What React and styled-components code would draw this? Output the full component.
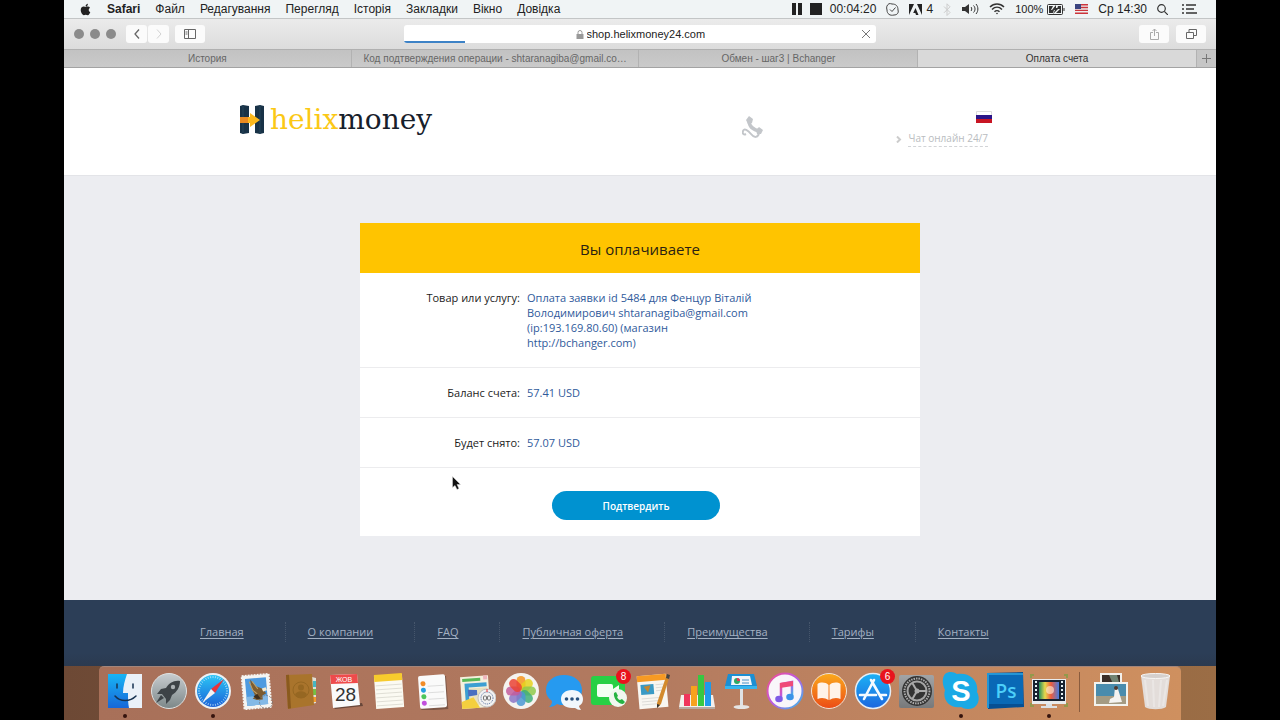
import React from "react";
import styled, { createGlobalStyle, css } from "styled-components";
import { FaApple } from "react-icons/fa";

const GlobalStyle = createGlobalStyle`
  *, *::before, *::after { box-sizing: border-box; }
  body { margin: 0; background: #000; }
  button, input { font: inherit; color: inherit; border: 0; margin: 0; padding: 0; background: none; }
  svg { display: block; flex: none; }
`;

const system = `"Liberation Sans", Arial, sans-serif`;
const site = `"Open Sans", "Noto Sans", sans-serif`;

const Desktop = styled.div`
  display: flex;
  flex-direction: column;
  min-height: 100vh;
  margin: 0 5%;
  font-family: ${system};
  background: linear-gradient(90deg, #6d4935, #80583d 40%, #9b6d45);
`;

/* ---------- menu bar ---------- */

const MenuBar = styled.nav`
  display: flex;
  justify-content: space-between;
  align-items: center;
  height: 18px;
  padding: 0 19px 0 15px;
  background: #f0f4f5;
  font-size: 12px;
  line-height: 18px;
  color: #222;
`;

const MenuGroup = styled.div`
  display: flex;
  align-items: center;
  gap: ${(p) => p.$gap}px;
  white-space: nowrap;
`;

const MenuItem = styled.button`
  font-weight: ${(p) => (p.$strong ? 700 : 400)};
`;

const MenuStatus = styled.span`
  display: flex;
  align-items: center;
  gap: ${(p) => p.$gap || 4}px;
  font-size: ${(p) => (p.$small ? 11 : 12)}px;
`;

/* ---------- browser chrome ---------- */

const Toolbar = styled.div`
  display: grid;
  grid-template-columns: 1fr minmax(0, 472px) 1fr;
  align-items: center;
  height: 31px;
  padding: 0 10px;
  background: linear-gradient(#ebebeb, #dcdcdc);
  border-top: 1px solid #c3c5c6;
`;

const ToolGroup = styled.div`
  display: flex;
  align-items: center;
  justify-content: ${(p) => (p.$end ? "flex-end" : "flex-start")};
  gap: ${(p) => p.$gap}px;
`;

const Lights = styled.div`
  display: flex;
  gap: 6px;
  margin-right: 4px;
`;

const Light = styled.button`
  width: 10px;
  height: 10px;
  border-radius: 50%;
  background: #8b8b8b;
`;

const NavPair = styled.div`
  display: flex;
  gap: 1px;
`;

const ToolButton = styled.button`
  display: flex;
  align-items: center;
  justify-content: center;
  width: ${(p) => (p.$wide ? 30 : 21)}px;
  height: 18px;
  border-radius: 3px;
  background: #fbfbfb;
  color: ${(p) => (p.$faint ? "#d2d2d2" : "#666")};
`;

const AddressBar = styled.div`
  position: relative;
  display: flex;
  align-items: center;
  justify-content: center;
  gap: 3px;
  height: 18px;
  border-radius: 3px;
  background: #fff;
  overflow: hidden;
`;

const AddressInput = styled.input`
  width: 118px;
  height: 18px;
  font-size: 11px;
  color: #222;
  outline: none;
`;

const LoadProgress = styled.span`
  position: absolute;
  left: 0;
  bottom: 0;
  width: 13%;
  height: 2px;
  background: #3d82c6;
`;

const StopButton = styled.button`
  position: absolute;
  right: 6px;
  top: 5px;
  color: #777;
`;

const TabStrip = styled.div`
  display: flex;
  height: 19px;
  border-top: 1px solid #b0b0b0;
  border-bottom: 1px solid #a3a3a3;
  background: #c6c6c6;
`;

const Tab = styled.button`
  flex: ${(p) => p.$grow} 1 0;
  min-width: 0;
  overflow: hidden;
  white-space: nowrap;
  text-overflow: ellipsis;
  font-size: 10px;
  line-height: 17px;
  color: ${(p) => (p.$active ? "#333" : "#666")};
  background: ${(p) => (p.$active ? "#d9d9d9" : "linear-gradient(#c2c2c2, #cacaca)")};
  border-right: 1px solid #b2b2b2;
`;

const NewTab = styled.button`
  display: flex;
  align-items: center;
  justify-content: center;
  width: 19px;
  color: #777;
`;

/* ---------- site ---------- */

const SiteHeader = styled.header`
  height: 108px;
  padding-top: 36px;
  background: #fff;
  border-bottom: 1px solid #e3e4e8;
  font-family: ${site};
`;

const HeaderInner = styled.div`
  display: flex;
  align-items: flex-start;
  width: 800px;
  max-width: 100%;
  margin: 0 auto;
  padding-right: 48px;
`;

const Logo = styled.a`
  display: flex;
  gap: 6px;
  flex: 11 1 0;
  font-family: "DejaVu Serif", serif;
  font-size: 28px;
  line-height: 32px;
  color: #17202b;
  text-decoration: none;
`;

const LogoAccent = styled.span`
  color: #fbc815;
`;

const PhoneLink = styled.a`
  padding-top: 12px;
`;

const HeaderSide = styled.div`
  display: flex;
  flex-direction: column;
  align-items: flex-end;
  flex: 5 1 0;
  gap: 8px;
  padding-top: 7px;
`;

const ChatLink = styled.a`
  display: flex;
  align-items: center;
  gap: 6px;
  margin-right: 4px;
  font-size: 10px;
  line-height: 15px;
  color: #b9bcc0;
  text-decoration: none;
`;

const ChatText = styled.span`
  border-bottom: 1px dashed #d2d4d7;
`;

const Main = styled.main`
  flex: 1 0 auto;
  padding: 47px 16px 64px;
  background: #ecedf1;
  font-family: ${site};
`;

const Card = styled.section`
  width: 560px;
  max-width: 100%;
  margin: 0 auto;
  padding-bottom: 16px;
  background: #fff;
`;

const CardTitle = styled.h1`
  margin: 0;
  padding: 14px 0 12px;
  font-size: 15px;
  line-height: 24px;
  font-weight: 400;
  text-align: center;
  color: #2a1f12;
  background: #ffc400;
`;

const Details = styled.dl`
  margin: 0;
`;

const DetailRow = styled.div`
  display: grid;
  grid-template-columns: 160px 240px;
  column-gap: 7px;
  padding: 17px 0;
  border-bottom: 1px solid #ececee;
  font-size: 11px;
  line-height: 15px;
`;

const DetailLabel = styled.dt`
  text-align: right;
  color: #1c1c1c;
`;

const DetailValue = styled.dd`
  margin: 0;
  color: #2f5a9b;
`;

const ConfirmButton = styled.button`
  display: block;
  width: 168px;
  height: 29px;
  margin: 23px 0 0 192px;
  border-radius: 15px;
  background: #0092d0;
  color: #fff;
  font-size: 10px;
  font-weight: 600;
`;

const SiteFooter = styled.footer`
  padding: 22px 0 24px;
  background: linear-gradient(#2c3e57 80%, #2b3a50);
  font-family: ${site};
`;

const FooterNav = styled.nav`
  display: flex;
  width: 880px;
  max-width: 100%;
  margin: 0 auto;
  font-size: 11px;
  line-height: 20px;
`;

const FooterCell = styled.div`
  padding: 0 41px 0 22px;
  border-right: 1px dotted #46566c;
  &:first-child { padding-left: 0; }
  &:last-child { border: 0; }
`;

const FooterLink = styled.a`
  color: #a3b0c2;
  text-underline-offset: 2px;
`;

const Cursor = styled.svg`
  position: absolute;
  left: 92px;
  top: 8px;
`;

const ActionArea = styled.div`
  position: relative;
  display: flow-root;
`;

/* ---------- dock ---------- */

const Dock = styled.nav`
  display: flex;
  justify-content: center;
  align-self: center;
  width: 94%;
  height: 54px;
  padding-top: 5px;
  border-radius: 5px 5px 0 0;
  border-top: 1px solid #a3857a;
  background: linear-gradient(90deg, #a87059, #b27a60 50%, #cf905f);
`;

const DockItem = styled.button`
  position: relative;
  display: flex;
  justify-content: center;
  flex: 0 1 44px;
  height: 47px;
  ${(p) =>
    p.$running &&
    css`
      &::after {
        content: "";
        position: absolute;
        left: 50%;
        bottom: 1px;
        width: 4px;
        height: 4px;
        margin-left: -2px;
        border-radius: 50%;
        background: #35130d;
      }
    `}
`;

const DockDivider = styled.span`
  width: 1px;
  height: 40px;
  margin: 0 9px 0 8px;
  background: #8a5c3e;
`;

const Badge = styled.span`
  position: absolute;
  right: 0;
  top: -3px;
  width: 15px;
  height: 15px;
  border-radius: 50%;
  background: #e8131d;
  color: #fff;
  font-family: ${system};
  font-size: 10px;
  line-height: 15px;
  text-align: center;
`;

const Art = ({ children }) => (
  <svg width="38" height="38" viewBox="0 0 38 38" aria-hidden="true">{children}</svg>
);

const petals = ["#f7941d", "#e6d21e", "#8fc94a", "#3fae79", "#4a98d4", "#8b74c6", "#c35c9b", "#ea4335"];
const angles = (n) => Array.from({ length: n }, (_, i) => (i * 360) / n);

const FinderArt = () => (
  <Art>
    <defs><linearGradient id="finder" x1="0" y1="0" x2="0" y2="1"><stop stopColor="#18b5f5" /><stop offset="1" stopColor="#1767d8" /></linearGradient></defs>
    <path d="M2 2h34v34H2z" fill="#eaf1f8" />
    <path d="M2 2h19c-2 6-4 12-4 19h5c0 6 0 10 1 15H2z" fill="url(#finder)" />
    <path d="M11 12v4M27 12v4M9 24c5 6 15 6 21 0" stroke="#163250" strokeWidth="1.5" fill="none" strokeLinecap="round" />
  </Art>
);
const LaunchpadArt = () => (
  <Art>
    <defs><linearGradient id="launch" x1="0" y1="0" x2="0" y2="1"><stop stopColor="#c8cdd0" /><stop offset="1" stopColor="#7c8788" /></linearGradient></defs>
    <circle cx="19" cy="19" r="17.5" fill="url(#launch)" stroke="#dfe2e2" />
    <path d="M30 9c-6-1-11 2-14 7l-5 1-4 5 5 0 4 5 0 5 4-4 2-5c5-3 8-8 8-14z" fill="#3d4347" />
    <path d="M11 23l-5 8 8-5z" fill="#3d4347" /><circle cx="23" cy="15" r="2.2" fill="#aab0b3" />
  </Art>
);
const SafariArt = () => (
  <Art>
    <defs><linearGradient id="safari" x1="0" y1="0" x2="0" y2="1"><stop stopColor="#2cc6f5" /><stop offset="1" stopColor="#1b62d8" /></linearGradient></defs>
    <circle cx="19" cy="19" r="18" fill="#edf1f4" /><circle cx="19" cy="19" r="16" fill="url(#safari)" />
    {angles(36).map((a) => <path key={a} d="M19 4v2" stroke="#bfe6fb" strokeWidth=".7" transform={`rotate(${a} 19 19)`} />)}
    <path d="M30 7L17 17l4 4z" fill="#e8353b" /><path d="M8 31l9-14 4 4z" fill="#f3f3f3" />
  </Art>
);
const MailArt = () => (
  <Art>
    <g transform="rotate(-5 19 19)">
      <path d="M5 3h27v33H5z" fill="#f5f5f2" stroke="#f5f5f2" strokeWidth="2" strokeDasharray="2 1" />
      <path d="M8 6h21v27H8z" fill="#4e9be0" /><path d="M8 24h21v9H8z" fill="#83b9e6" />
      <path d="M13 7l5 7 6 3 4 5-4 2 0 4-6 0-4-2 3-2-3-8z" fill="#7d5c30" /><path d="M12 9l3 9 4 4M15 9l5 8" stroke="#c2a064" fill="none" /><path d="M24 17l4-1 1 3-4 1z" fill="#f4ead0" /><path d="M15 24l4-2 3 5-4 0z" fill="#3e2f1f" />
    </g>
    <circle cx="28" cy="30" r="6.500" fill="none" stroke="#777" strokeDasharray="2 1" strokeWidth=".7" />
  </Art>
);
const ContactsArt = () => (
  <Art>
    <path d="M30 5l4 1v25l-4 1z" fill="#dfdfd5" /><path d="M31 9h3v6h-3z" fill="#46b6c3" /><path d="M31 17h3v6h-3z" fill="#75c045" /><path d="M31 25h3v5h-3z" fill="#f39a2d" />
    <path d="M4 3l26-1 2 31-26 4z" fill="#a9742c" /><path d="M4 3l3-.2 2 33.500-3 .5z" fill="#8a5a1e" />
    <circle cx="19" cy="18" r="8" fill="none" stroke="#966722" /><circle cx="19" cy="15.500" r="3" fill="#966722" /><path d="M13 23c1-5 11-5 12 0-3 4-9 4-12 0z" fill="#966722" />
  </Art>
);
const CalendarArt = () => (
  <Art>
    <path d="M7 34l29-3 1 3-28 3z" fill="#4b332b" opacity=".7" />
    <path d="M4 3l27-1 3 31-27 3z" fill="#fafafa" /><path d="M4 3l27-1 1 9-27 1z" fill="#ee4b4b" />
    <text x="18" y="10" fontSize="7" fill="#fff" textAnchor="middle" fontFamily="Liberation Sans">ЖОВ</text>
    <text x="19.500" y="29" fontSize="19" fill="#333" textAnchor="middle" fontFamily="Liberation Sans">28</text>
  </Art>
);
const NotesArt = () => (
  <Art>
    <g transform="rotate(-4 19 19)"><path d="M5 3h28v33H5z" fill="#fbfaf2" /><path d="M5 2h28v7H5z" fill="#f7cb2d" />
      {[13, 17, 21, 25, 29, 33].map((y) => <path key={y} d={`M6 ${y}h26`} stroke="#d9d8cf" strokeWidth=".8" />)}</g>
  </Art>
);
const RemindersArt = () => (
  <Art>
    <g transform="rotate(-4 19 19)"><path d="M6 5h27v33H6z" fill="#5c4339" opacity=".6" /><rect x="5" y="3" width="27" height="33" rx="2" fill="#fafafa" />
      {["#f28c28", "#269fe0", "#4cc65b", "#c150dc"].map((c, i) => <g key={c}><circle cx="9.500" cy={11 + i * 6.5} r="2.500" fill={c} /><path d={`M14 ${14 + i * 6.5}h16`} stroke="#ddd" /></g>)}</g>
  </Art>
);
const WorkspaceArt = () => (
  <Art>
    <g transform="rotate(-4 19 19)"><path d="M3 4h28v32H3z" fill="#f4f0dd" /><path d="M5 6h18v3H5z" fill="#59b957" /><path d="M26 4h4v4h-4z" fill="#efb5bd" /><path d="M7 11h22v4H11v14H7z" fill="#3c9fd2" /><path d="M11 16h18v17H11z" fill="#e7e1c0" /><path d="M10 17l9 1 0 5-9 1z" fill="#496fc0" /><path d="M3 29l12-4 6 11H3z" fill="#f4cf3e" /></g>
    <circle cx="29" cy="26" r="9" fill="#f2f2f2" stroke="#c2c2c2" /><circle cx="29" cy="26" r="6" fill="none" stroke="#4c6798" strokeDasharray="1 1" /><rect x="25.500" y="24" width="3" height="4" rx="1" fill="none" stroke="#555" strokeWidth=".8" /><rect x="29.500" y="24" width="3" height="4" rx="1" fill="none" stroke="#555" strokeWidth=".8" /><path d="M29 17v3" stroke="#e33" />
  </Art>
);
const PhotosArt = () => (
  <Art>
    <circle cx="19" cy="19" r="18" fill="#f5f3ef" />
    {petals.map((c, i) => <rect key={c} x="14.500" y="4" width="9" height="14.500" rx="4.500" fill={c} opacity=".85" transform={`rotate(${i * 45} 19 19)`} />)}
  </Art>
);
const MessagesArt = () => (
  <Art>
    <path d="M18 3c10 0 18 6 18 15s-8 15-18 15c-3 0-5 0-7-1-2 2-5 3-8 3 2-2 3-3 3-6-4-3-6-6-6-11C0 9 8 3 18 3z" fill="#269af0" />
    <path d="M26 18c7 0 11 4 11 9 0 3-1 5-4 7 0 1 1 2 2 4-3 0-4-1-6-2h-3c-7 0-11-4-11-9s4-9 11-9z" fill="#f1f7fc" />
    <circle cx="20.500" cy="27" r="1.800" fill="#28527f" /><circle cx="26" cy="27" r="1.800" fill="#28527f" /><circle cx="31.500" cy="27" r="1.800" fill="#28527f" />
  </Art>
);
const FaceTimeArt = () => (
  <Art>
    <rect x="1" y="4" width="34" height="29" rx="3" fill="#27d045" /><rect x="7" y="12" width="16" height="13" rx="2" fill="#f3fff4" /><path d="M23 17l6-4v11l-6-4z" fill="#f3fff4" />
    <circle cx="28" cy="26" r="9" fill="#f0f7ef" /><path d="M24 21l2-1 2 4-1 1c1 2 2 3 3 3l2-1 3 3-2 2c-5 0-10-6-9-11z" fill="#25b342" />
  </Art>
);
const PagesArt = () => (
  <Art>
    <g transform="rotate(-5 19 19)"><path d="M4 3h29v33H4z" fill="#f8f6f1" /><path d="M4 3h29v6H4z" fill="#f69a24" /><path d="M7 12h13v10H7z" fill="#3a9ac5" /><path d="M10 14l7-1-3 7z" fill="#c28732" /><path d="M22 13h8M22 16h8M22 19h8M7 26h20M7 29h20M7 32h17" stroke="#dddcd8" /></g>
    <path d="M33 2l3 1-9 29-4 4 0-5z" fill="#d38a2d" /><path d="M33 2l3 1-1 4-3-1z" fill="#444" /><path d="M23 32l3 1-3 3z" fill="#333" />
  </Art>
);
const NumbersArt = () => (
  <Art>
    <path d="M3 23h32l2 12H1z" fill="#f3f0ed" /><path d="M1 35h36v2H1z" fill="#b8a9a0" />
    <path d="M6 22h6v12H6z" fill="#f0355c" /><path d="M13 14h6v20h-6z" fill="#f7a21d" /><path d="M20 3h6v31h-6z" fill="#37c842" /><path d="M27 10h6v24h-6z" fill="#1f9bea" />
  </Art>
);
const KeynoteArt = () => (
  <Art>
    <path d="M6 2h26l3 12H3z" fill="#1c8fd3" /><path d="M3 14h32v3H3z" fill="#37b5ee" /><path d="M10 4h18l2 9H9z" fill="#f3f7fa" /><circle cx="15" cy="9" r="3" fill="#2da866" /><path d="M15 9V6a3 3 0 013 3z" fill="#e35" /><path d="M20 8h7M20 11h7" stroke="#4992c8" />
    <path d="M18 17h3v18h-3z" fill="#dfe2e5" /><ellipse cx="19.500" cy="35" rx="8" ry="2" fill="#e6e5e4" />
  </Art>
);
const MusicArt = () => (
  <Art>
    <defs><linearGradient id="tune" x1="0" y1="0" x2="1" y2="1"><stop stopColor="#f34e8b" /><stop offset=".5" stopColor="#b95be5" /><stop offset="1" stopColor="#31bfe9" /></linearGradient></defs>
    <circle cx="19" cy="19" r="17.500" fill="#f9f6fa" stroke="url(#tune)" strokeWidth="2" />
    <path d="M15 26V12l11-2v14" stroke="url(#tune)" strokeWidth="2.500" fill="none" /><path d="M14 11l13-2v5l-13 2z" fill="#ef4b78" /><ellipse cx="13" cy="27" rx="3.800" ry="3.200" fill="#7e5be6" /><ellipse cx="24" cy="25" rx="3.800" ry="3.200" fill="#3c94e8" />
  </Art>
);
const BooksArt = () => (
  <Art>
    <defs><linearGradient id="books" x1="0" y1="0" x2="0" y2="1"><stop stopColor="#fbaa1c" /><stop offset="1" stopColor="#ec4b16" /></linearGradient></defs>
    <circle cx="19" cy="19" r="17.500" fill="url(#books)" stroke="#f2e2d5" /><path d="M18.500 13c-3-3-8-3-11-1v15c4-2 8-1 11 1zM19.500 13c3-3 8-3 11-1v15c-4-2-8-1-11 1z" fill="#fff3e8" />
  </Art>
);
const StoreArt = () => (
  <Art>
    <defs><linearGradient id="store" x1="0" y1="0" x2="0" y2="1"><stop stopColor="#1cb2f5" /><stop offset="1" stopColor="#1c66de" /></linearGradient></defs>
    <circle cx="19" cy="19" r="17.500" fill="url(#store)" stroke="#e5edf4" strokeWidth="1.500" />
    <path d="M20 8L10 27M17 8l11 19M6 23h16M26 23h6" stroke="#f5fbff" strokeWidth="2.600" strokeLinecap="round" />
  </Art>
);
const SettingsArt = () => (
  <Art>
    <defs><linearGradient id="steel" x1="0" y1="0" x2="0" y2="1"><stop stopColor="#a2a4a6" /><stop offset="1" stopColor="#77797b" /></linearGradient></defs>
    <rect x="1" y="3" width="35" height="33" rx="2" fill="url(#steel)" /><circle cx="19" cy="19" r="15" fill="#333" />
    <circle cx="19" cy="19" r="12.500" fill="none" stroke="#aaa" strokeWidth="2" strokeDasharray="1.500 1" /><circle cx="19" cy="19" r="9.500" fill="none" stroke="#a5a5a5" strokeWidth="2" />
    {[90, 210, 330].map((a) => <path key={a} d="M19 19V10" stroke="#aaa" strokeWidth="2" transform={`rotate(${a} 19 19)`} />)}<circle cx="19" cy="19" r="2.500" fill="#aaa" />
  </Art>
);
const SkypeArt = () => (
  <Art>
    <path d="M3 2c4-3 9-2 12 0 12-2 22 6 20 18 4 7 1 17-9 17-3 0-5-1-7-2C8 37 0 28 3 18 0 12 0 6 3 2z" fill="#1aa9e5" />
    <text x="19" y="29" textAnchor="middle" fontFamily="Liberation Sans" fontWeight="700" fontSize="29" fill="#fff">S</text>
  </Art>
);
const PhotoshopArt = () => (
  <Art>
    <path d="M1 1l36-1 1 35-36 2z" fill="#064f93" /><path d="M2 1h35v31H2z" fill="#0969b6" /><path d="M1 1h36v2H3v33l-2 0z" fill="#2496d6" />
    <text x="20" y="26" textAnchor="middle" fontFamily="Open Sans" fontSize="19" fill="#4cd0fa" fontWeight="600">Ps</text>
  </Art>
);
const RecorderArt = () => (
  <Art>
    <defs><linearGradient id="spectrum"><stop stopColor="#218d5f" /><stop offset=".3" stopColor="#e8d94d" /><stop offset=".6" stopColor="#ef5b3b" /><stop offset="1" stopColor="#477de0" /></linearGradient></defs>
    <path d="M1 6V3h3M34 3h3v3M1 31v3h3M34 34h3v-3" stroke="#93994b" strokeWidth="2" fill="none" />
    <rect x="2" y="7" width="34" height="25" fill="#e8ebed" /><path d="M3 8h32v21H3z" fill="#172230" /><path d="M9 10h20v17H9z" fill="url(#spectrum)" /><circle cx="20" cy="18" r="4" fill="#fff3dc" opacity=".6" />
    <path d="M6 9v20M32 9v20" stroke="#e5f1f4" strokeWidth="2" strokeDasharray="2 2" /><path d="M16 32h6v2h5v2H11v-2h5z" fill="#dce0e3" />
  </Art>
);
const StackArt = () => (
  <Art>
    <path d="M8 1h22v16H8z" fill="#f2f0ec" /><path d="M10 3h18v12H10z" fill="#392d27" /><path d="M17 3l8 0 2 7-6 2z" fill="#718372" />
    <path d="M2 10h34v24H2z" fill="#f3f3ee" /><path d="M4 12h30v20H4z" fill="#498cad" /><path d="M4 24h30v8H4z" fill="#a49b83" /><path d="M23 15l3 2 4 13-13 1 1-4 4-2z" fill="#f4f3f0" /><circle cx="24" cy="16" r="2" fill="#513a30" />
  </Art>
);
const TrashArt = () => (
  <Art>
    <path d="M5 4h29l-4 31c-4 3-17 3-21 0z" fill="#e4e2e0" opacity=".95" /><path d="M9 8l3 26M17 8l1 27M25 8l-2 27M31 8l-4 26" stroke="#f6f5f5" strokeWidth="2" opacity=".4" /><ellipse cx="19.500" cy="4" rx="14.500" ry="2.500" fill="#d5d0cd" stroke="#f7f6f5" />
  </Art>
);

const apps = [
  ["Finder", FinderArt, true], ["Launchpad", LaunchpadArt], ["Safari", SafariArt, true], ["Mail", MailArt],
  ["Contacts", ContactsArt], ["Calendar", CalendarArt], ["Notes", NotesArt], ["Reminders", RemindersArt],
  ["Workspace", WorkspaceArt], ["Photos", PhotosArt], ["Messages", MessagesArt], ["FaceTime", FaceTimeArt, false, 8],
  ["Pages", PagesArt], ["Numbers", NumbersArt], ["Keynote", KeynoteArt], ["iTunes", MusicArt], ["iBooks", BooksArt],
  ["App Store", StoreArt, false, 6], ["System Preferences", SettingsArt], ["Skype", SkypeArt, true],
  ["Photoshop", PhotoshopArt], ["Screen recorder", RecorderArt, true],
];
const places = [["Pictures", StackArt], ["Trash", TrashArt]];

const menus = ["Файл", "Редагування", "Перегляд", "Історія", "Закладки", "Вікно", "Довідка"];
const footerLinks = ["Главная", "О компании", "FAQ", "Публичная оферта", "Преимущества", "Тарифы", "Контакты"];
const details = [
  ["Товар или услугу:", "Оплата заявки id 5484 для Фенцур Віталій Володимирович shtaranagiba@gmail.com (ip:193.169.80.60) (магазин http://bchanger.com)"],
  ["Баланс счета:", "57.41 USD"],
  ["Будет снято:", "57.07 USD"],
];

const StatusIcons = () => (
  <MenuGroup $gap={10}>
    <MenuStatus $gap={8}>
      <svg width="10" height="12" viewBox="0 0 10 12"><path d="M0 0h4v12H0zM6 0h4v12H6z" fill="#222" /></svg>
      <svg width="12" height="12" viewBox="0 0 12 12"><path d="M0 0h12v12H0z" fill="#222" /></svg>
      <span>00:04:20</span>
    </MenuStatus>
    <svg width="13" height="13" viewBox="0 0 13 13" fill="none" stroke="#444"><path d="M3 .7c1-.3 2 0 3 .3 4 0 6 2 6 6 1 3-1 5-4 5-4 1-7-1-7-5-1-3 0-5 2-6.300zM4 6.500l2 2 3.500-4" /></svg>
    <MenuStatus>
      <svg width="13" height="11" viewBox="0 0 13 11" fill="#222"><path d="M0 0h5L0 11zM8 0h5v11zM6.500 4l3 7H7L6.300 9H4.200z" /></svg>
      <span>4</span>
    </MenuStatus>
    <svg width="9" height="13" viewBox="0 0 9 13" fill="none" stroke="#ccc"><path d="M1 3.500l6 6-3 3V.8l3 3-6 6" /></svg>
    <svg width="17" height="12" viewBox="0 0 17 12" fill="none" stroke="#333"><path d="M0 4h3l4-3v10L3 8H0z" fill="#333" stroke="none" /><path d="M9 4c1 1 1 3 0 4M11.500 2.500c2 2 2 5 0 7M14 1c2.500 3 2.500 7 0 10" /></svg>
    <svg width="16" height="12" viewBox="0 0 16 12" fill="none" stroke="#333" strokeWidth="1.500"><path d="M1 4c4-4 10-4 14 0M3 6.500c3-3 7-3 10 0M5.500 8.800c1.500-1.500 3.500-1.500 5 0" /><circle cx="8" cy="10.500" r=".8" fill="#333" stroke="none" /></svg>
    <MenuStatus $small>
      <span>100%</span>
      <svg width="18" height="11" viewBox="0 0 18 11"><rect x=".5" y=".5" width="15" height="10" rx="1" fill="none" stroke="#333" /><path d="M2 2h4L4 6h3L6 9H2zM11 2h3v7H9l4-4h-3z" fill="#333" /><path d="M9 1L5 6h3L6 10l6-6H9z" fill="#333" /><path d="M17 4v3" stroke="#333" /></svg>
    </MenuStatus>
    <svg width="13" height="10" viewBox="0 0 13 10"><path d="M0 0h13v10H0z" fill="#eee" /><path d="M0 .7h13M0 3.500h13M0 6.400h13M0 9.300h13" stroke="#cc343b" strokeWidth="1.400" /><path d="M0 0h6v5H0z" fill="#39437f" /></svg>
    <span>Ср 14:30</span>
    <MenuStatus $gap={14}>
      <svg width="11" height="11" viewBox="0 0 11 11" fill="none" stroke="#333" strokeWidth="1.200"><circle cx="4.500" cy="4.500" r="3.800" /><path d="M7.300 7.300L11 11" /></svg>
      <svg width="15" height="10" viewBox="0 0 15 10" stroke="#333" strokeWidth="1.400"><path d="M0 1h2M4 1h10M0 5h2M4 5h8M0 9h2M4 9h11" /></svg>
    </MenuStatus>
  </MenuGroup>
);

const BrowserChrome = () => (
  <>
    <Toolbar>
      <ToolGroup $gap={6}>
        <Lights><Light aria-label="Close" /><Light aria-label="Minimise" /><Light aria-label="Zoom" /></Lights>
        <NavPair>
          <ToolButton aria-label="Back"><svg width="6" height="10" viewBox="0 0 6 10" fill="none" stroke="currentColor" strokeWidth="1.300"><path d="M5 .5L1 5l4 4.500" /></svg></ToolButton>
          <ToolButton $faint aria-label="Forward"><svg width="6" height="10" viewBox="0 0 6 10" fill="none" stroke="currentColor"><path d="M1 .5L5 5 1 9.500" /></svg></ToolButton>
        </NavPair>
        <ToolButton $wide aria-label="Sidebar"><svg width="12" height="10" viewBox="0 0 12 10" fill="none" stroke="currentColor"><path d="M.5.5h11v9H.5zM4.500.5v9M1.500 3h2M1.500 5h2" /></svg></ToolButton>
      </ToolGroup>
      <AddressBar>
        <svg width="8" height="9" viewBox="0 0 8 9"><path d="M.5 4h7v5h-7z" fill="#999" /><path d="M2 4V2.500a2 2 0 014 0V4" fill="none" stroke="#999" /></svg>
        <AddressInput aria-label="Address" defaultValue="shop.helixmoney24.com" />
        <LoadProgress />
        <StopButton aria-label="Stop"><svg width="8" height="8" viewBox="0 0 8 8" stroke="currentColor"><path d="M0 0l8 8M8 0L0 8" /></svg></StopButton>
      </AddressBar>
      <ToolGroup $end $gap={7}>
        <ToolButton $wide aria-label="Share"><svg width="9" height="12" viewBox="0 0 9 12" fill="none" stroke="#aaa"><path d="M3 4.500H.5v7h8v-7H6M4.500 8V1M2.500 3l2-2 2 2" /></svg></ToolButton>
        <ToolButton $wide aria-label="Tabs"><svg width="11" height="10" viewBox="0 0 11 10" fill="none" stroke="currentColor"><path d="M.5 3.500h7v6h-7zM3 3.500v-3h7.500v6h-3" /></svg></ToolButton>
      </ToolGroup>
    </Toolbar>
    <TabStrip>
      <Tab $grow={288}>История</Tab>
      <Tab $grow={288}>Код подтверждения операции - shtaranagiba@gmail.co…</Tab>
      <Tab $grow={279}>Обмен - шаг3 | Bchanger</Tab>
      <Tab $grow={279} $active>Оплата счета</Tab>
      <NewTab aria-label="New tab"><svg width="9" height="9" viewBox="0 0 9 9" stroke="currentColor"><path d="M4.500 0v9M0 4.500h9" /></svg></NewTab>
    </TabStrip>
  </>
);

const PageHeader = () => (
  <SiteHeader>
    <HeaderInner>
      <Logo href="#">
        <svg width="24" height="32" viewBox="0 0 24 32">
          <path d="M0 2l3-1 6 1v27l-6 1-3-1zM15 2l5-1 4 1v27l-4 1-5-1z" fill="#183247" /><path d="M3 1v29M20 1v29" stroke="#24445b" />
          <path d="M0 13h10V9l10 7-10 7v-4H0z" fill="#fbb81c" /><path d="M0 13h8v6H0z" fill="#e98a22" />
        </svg>
        <span><LogoAccent>helix</LogoAccent>money</span>
      </Logo>
      <PhoneLink href="#" aria-label="Phone">
        <svg width="22" height="23" viewBox="0 0 22 23" fill="none" stroke="#c3c6ca"><path d="M7 4c0 6 4 10 11 11" strokeWidth="3.500" /><path d="M4 4l3-4 4 3-1 4-4 1zM14 14l3-3 4 3-2 4-4 0z" fill="#c3c6ca" stroke="none" /><path d="M17 17c-1 5-5 5-8 1s-7-6-8-3 1 4 3 3" strokeWidth="2" /></svg>
      </PhoneLink>
      <HeaderSide>
        <svg width="16" height="12" viewBox="0 0 16 12"><path d="M.5.5h15v11H.5z" fill="#fff" stroke="#ddd" /><path d="M0 4h16v4H0z" fill="#2b1689" /><path d="M0 8h16v4H0z" fill="#c81523" /></svg>
        <ChatLink href="#">
          <svg width="6" height="7" viewBox="0 0 6 7" fill="none" stroke="#ccc" strokeWidth="2"><path d="M1 .5l3 3-3 3" /></svg>
          <ChatText>Чат онлайн 24/7</ChatText>
        </ChatLink>
      </HeaderSide>
    </HeaderInner>
  </SiteHeader>
);

export default function App() {
  return (
    <>
      <GlobalStyle />
      <Desktop>
        <MenuBar>
          <MenuGroup $gap={15}>
            <MenuItem aria-label="Apple"><FaApple size={13} /></MenuItem>
            <MenuItem $strong>Safari</MenuItem>
            {menus.map((m) => <MenuItem key={m}>{m}</MenuItem>)}
          </MenuGroup>
          <StatusIcons />
        </MenuBar>
        <BrowserChrome />
        <PageHeader />
        <Main>
          <Card>
            <CardTitle>Вы оплачиваете</CardTitle>
            <Details>
              {details.map(([label, value]) => (
                <DetailRow key={label}><DetailLabel>{label}</DetailLabel><DetailValue>{value}</DetailValue></DetailRow>
              ))}
            </Details>
            <ActionArea>
              <ConfirmButton>Подтвердить</ConfirmButton>
              <Cursor width="9" height="14" viewBox="0 0 9 14"><path d="M.5.5v11l2.500-2 2 4 2-1-2-4h3.500z" fill="#111" stroke="#ddd" strokeWidth=".5" /></Cursor>
            </ActionArea>
          </Card>
        </Main>
        <SiteFooter>
          <FooterNav>
            {footerLinks.map((l) => <FooterCell key={l}><FooterLink href="#">{l}</FooterLink></FooterCell>)}
          </FooterNav>
        </SiteFooter>
        <Dock>
          {apps.map(([name, Icon, running, badge]) => (
            <DockItem key={name} aria-label={name} $running={running}><Icon />{badge && <Badge>{badge}</Badge>}</DockItem>
          ))}
          <DockDivider />
          {places.map(([name, Icon]) => <DockItem key={name} aria-label={name}><Icon /></DockItem>)}
        </Dock>
      </Desktop>
    </>
  );
}
